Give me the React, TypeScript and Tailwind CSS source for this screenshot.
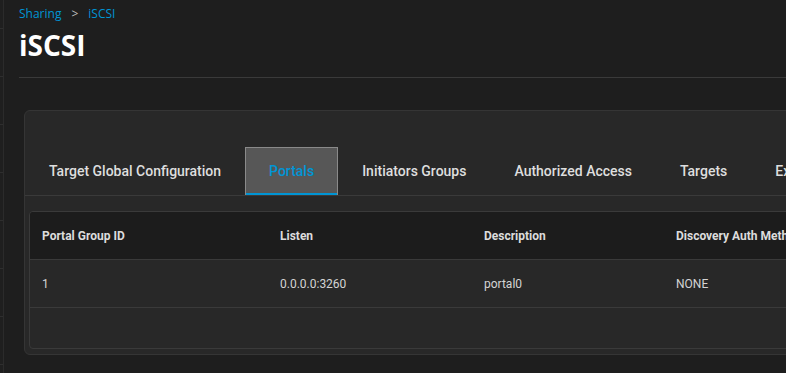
import React from 'react';

const tabs = [
  'Target Global Configuration',
  'Portals',
  'Initiators Groups',
  'Authorized Access',
  'Targets',
  'Extents',
];

const columns = [
  { label: 'Portal Group ID', width: 'w-[238px]' },
  { label: 'Listen', width: 'w-[204px]' },
  { label: 'Description', width: 'w-[192px]' },
  { label: 'Discovery Auth Method', width: 'w-[200px]' },
];

const rows = [['1', '0.0.0.0:3260', 'portal0', 'NONE']];

const SideStrip: React.FC = () => (
  <div className="flex w-[4px] shrink-0 flex-col border-r border-[#2b2b2b] bg-[#1f1f1f]">
    <div className="h-[29px] shrink-0 border-b border-[#2e2e2e]" />
    {[...Array(7)].map((_, i) => (
      <div key={i} className="h-[48px] shrink-0 border-b border-[#2e2e2e]" />
    ))}
  </div>
);

const App: React.FC = () => {
  return (
    <div
      className="flex h-[373px] w-[786px] overflow-hidden bg-[#1e1e1e]"
      style={{ fontFamily: 'Roboto, "Liberation Sans", sans-serif' }}
    >
      <SideStrip />
      <main className="min-w-0 flex-1 pl-[15px]">
        <header className="pt-[6px]" style={{ fontFamily: '"Open Sans", sans-serif' }}>
          <div className="flex items-center text-[12px] leading-[16px]">
            <span className="text-[#0095d5]">Sharing</span>
            <span className="mx-[10px] text-[#bdbdbd]">&gt;</span>
            <span className="text-[#0095d5]">iSCSI</span>
          </div>
          <h1 className="mt-[5px] text-[28px] font-bold leading-[36px] text-white">iSCSI</h1>
        </header>
        <hr className="mt-[14px] w-[800px] border-t border-[#3a3a3a]" />

        <section className="ml-[5px] mt-[32px] w-[800px] rounded-[6px] border border-[#353535] bg-[#282828] pb-[5px]">
          <nav className="mt-[36px] flex h-[49px] border-b border-[#3a3a3a]">
            {tabs.map((tab) =>
              tab === 'Portals' ? (
                <div
                  key={tab}
                  className="flex h-[48px] shrink-0 items-center border border-b-0 border-[#8a8a8a] bg-[#575757] px-[23px] text-[14px] font-medium text-[#0095d5] shadow-[inset_0_-2px_0_#0095d5]"
                >
                  {tab}
                </div>
              ) : (
                <div
                  key={tab}
                  className="flex h-[48px] shrink-0 items-center px-[24px] text-[14px] font-medium text-[#dedede]"
                >
                  {tab}
                </div>
              )
            )}
          </nav>

          <div className="ml-[4px] mt-[15px] overflow-hidden rounded-[4px] border border-[#3a3a3a] bg-[#282828]">
            <div className="flex h-[48px] items-center border-b border-[#3a3a3a] bg-[#1c1c1c]">
              {columns.map((c) => (
                <div
                  key={c.label}
                  className={`${c.width} shrink-0 whitespace-nowrap pl-[12px] text-[12px] font-bold text-[#dcdcdc]`}
                >
                  {c.label}
                </div>
              ))}
            </div>
            {rows.map((r, i) => (
              <div key={i} className="flex h-[48px] items-center border-b border-[#3a3a3a]">
                {r.map((cell, j) => (
                  <div
                    key={j}
                    className={`${columns[j].width} shrink-0 pl-[12px] text-[12px] text-[#d4d4d4]`}
                  >
                    {cell}
                  </div>
                ))}
              </div>
            ))}
            <div className="h-[40px]" />
          </div>
        </section>
      </main>
    </div>
  );
};

export default App;
